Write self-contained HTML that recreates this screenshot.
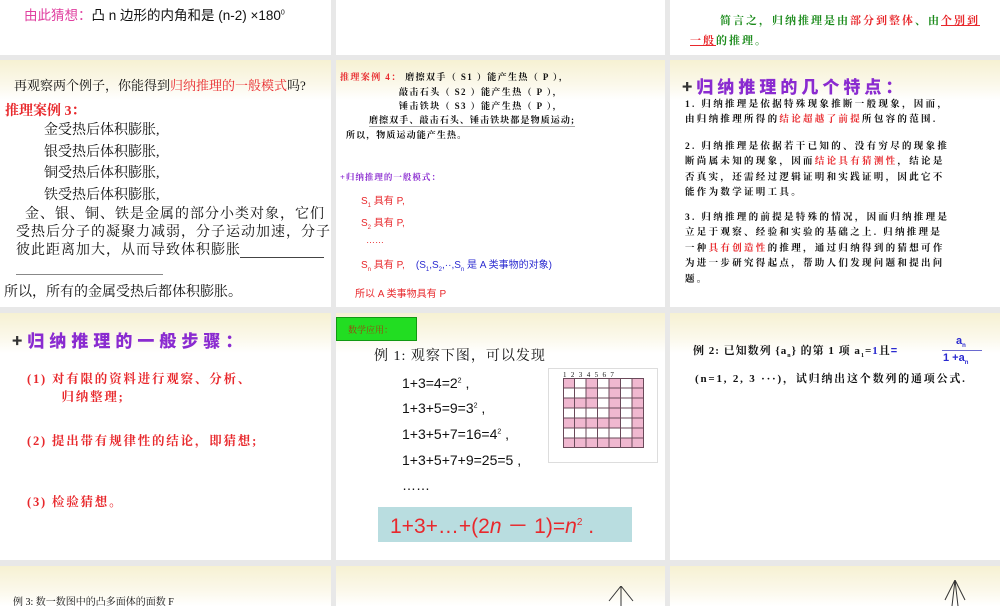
<!DOCTYPE html>
<html><head><meta charset="utf-8"><style>
*{margin:0;padding:0;box-sizing:border-box}
body{width:1000px;height:600px;background:#e8e8e8;position:relative;overflow:hidden;font-family:"Liberation Serif","Noto Serif CJK SC",serif;color:#111}
.s{position:absolute;background:#fff;overflow:hidden}
.band{position:absolute;left:0;right:0;top:0;height:40px;background:linear-gradient(#f6f1d2,#fbf8ea 60%,#fff)}
.t{position:absolute;white-space:nowrap}
.sans{font-family:"Liberation Sans","Noto Sans CJK SC",sans-serif}
.r{color:#e8282c}
.p{color:#8a2bd0}
.b{color:#2a2ad0}
.g{color:#1a8a1a}
.ser{font-family:"Liberation Serif","Noto Serif CJK SC",serif;font-weight:bold}
.ttl{font-family:"Noto Sans CJK SC",sans-serif;font-weight:900}
sup,sub{line-height:0}
</style></head><body>

<!-- row1 -->
<div class="s" style="left:0;top:0;width:331px;height:55px">
<div class="t sans" style="left:24px;top:4px;font-size:13.5px"><span style="color:#e040a0;font-family:'Noto Sans CJK SC'">由此猜想：</span>凸 n 边形的内角和是 (n-2) ×180<sup style="font-size:7px">0</sup></div>
</div>
<div class="s" style="left:336px;top:0;width:329px;height:55px"></div>
<div class="s" style="left:670px;top:0;width:330px;height:55px">
<div class="t ser" style="left:50px;top:12px;font-size:11px;letter-spacing:2px"><span class="g">简言之，归纳推理是由</span><span class="r">部分到整体</span><span class="g">、由</span><span class="r" style="text-decoration:underline">个别到</span></div>
<div class="t ser" style="left:20px;top:32px;font-size:11px;letter-spacing:2px"><span class="r" style="text-decoration:underline">一般</span><span class="g">的推理。</span></div>
</div>

<!-- row2 -->
<div class="s" style="left:0;top:60px;width:331px;height:247px"><div class="band"></div>
<div class="t" style="left:14px;top:15px;font-size:13px">再观察两个例子，你能得到<span class="r">归纳推理的一般模式</span>吗?</div>
<div class="t ser r" style="left:5px;top:40px;font-size:14px">推理案例 3：</div>
<div class="t" style="left:44px;top:60px;font-size:14px;line-height:21.5px">金受热后体积膨胀,<br>银受热后体积膨胀,<br>铜受热后体积膨胀,<br>铁受热后体积膨胀,</div>
<div class="t" style="left:16px;top:146px;font-size:14px;line-height:18px;letter-spacing:1px">&nbsp;&nbsp;金、银、铜、铁是金属的部分小类对象，它们<br>受热后分子的凝聚力减弱，分子运动加速，分子<br>彼此距离加大，从而导致体积膨胀</div>
<div style="position:absolute;left:240px;top:197px;width:84px;border-top:1px solid #444"></div>
<div style="position:absolute;left:16px;top:214px;width:147px;border-top:1px solid #888"></div>
<div class="t" style="left:4px;top:221px;font-size:14px">所以，所有的金属受热后都体积膨胀。</div>
</div>

<div class="s" style="left:336px;top:60px;width:329px;height:247px"><div class="band"></div>
<div class="t ser" style="left:4px;top:10px;font-size:9px;line-height:14.5px;letter-spacing:1.4px"><span class="r">推理案例 4：</span> 磨擦双手（ S1 ）能产生热（ P ），</div>
<div class="t ser" style="left:63px;top:24.5px;font-size:9px;line-height:14.5px;letter-spacing:1.4px">敲击石头（ S2 ）能产生热（ P ），<br>锤击铁块（ S3 ）能产生热（ P ），</div>
<div class="t ser" style="left:33px;top:53px;font-size:9px;letter-spacing:1.1px;border-bottom:1px solid #aaa">磨擦双手、敲击石头、锤击铁块都是物质运动;</div>
<div class="t ser" style="left:10px;top:68px;font-size:9px;letter-spacing:1.1px">所以，物质运动能产生热。</div>
<div class="t ser p" style="left:4px;top:111px;font-size:8.5px;letter-spacing:1px">+归纳推理的一般模式：</div>
<div class="t sans r" style="left:25px;top:132px;font-size:10px">S<sub style="font-size:6px">1</sub> 具有 P,</div>
<div class="t sans r" style="left:25px;top:154px;font-size:10px">S<sub style="font-size:6px">2</sub> 具有 P,</div>
<div class="t sans r" style="left:30px;top:175px;font-size:9px">……</div>
<div class="t sans r" style="left:25px;top:196px;font-size:10px">S<sub style="font-size:6px">n</sub> 具有 P, &nbsp;&nbsp;&nbsp;<span class="b">(S<sub style="font-size:6px">1</sub>,S<sub style="font-size:6px">2</sub>,··,S<sub style="font-size:6px">n</sub> 是 A 类事物的对象)</span></div>
<div class="t sans r" style="left:19px;top:225px;font-size:10px">所以 A 类事物具有 P</div>
</div>

<div class="s" style="left:670px;top:60px;width:330px;height:247px"><div class="band"></div>
<div class="t ttl p" style="left:12px;top:13px;font-size:17px;letter-spacing:4px"><span style="color:#333">+</span>归纳推理的几个特点：</div>
<div class="t ser" style="left:15px;top:38px;font-size:9.5px;line-height:15.4px;letter-spacing:2.3px">1. 归纳推理是依据特殊现象推断一般现象，因而，<br>由归纳推理所得的<span class="r">结论超越了前提</span>所包容的范围.</div>
<div class="t ser" style="left:15px;top:80px;font-size:9.5px;line-height:15.4px;letter-spacing:2.3px">2. 归纳推理是依据若干已知的、没有穷尽的现象推<br>断尚属未知的现象，因而<span class="r">结论具有猜测性</span>，结论是<br>否真实，还需经过逻辑证明和实践证明，因此它不<br>能作为数学证明工具。</div>
<div class="t ser" style="left:15px;top:151px;font-size:9.5px;line-height:15.4px;letter-spacing:2.3px">3. 归纳推理的前提是特殊的情况，因而归纳推理是<br>立足于观察、经验和实验的基础之上. 归纳推理是<br>一种<span class="r">具有创造性</span>的推理，通过归纳得到的猜想可作<br>为进一步研究得起点，帮助人们发现问题和提出问<br>题。</div>
</div>

<!-- row3 -->
<div class="s" style="left:0;top:313px;width:331px;height:247px"><div class="band"></div>
<div class="t ttl p" style="left:12px;top:14px;font-size:17px;letter-spacing:5px"><span style="color:#333">+</span>归纳推理的一般步骤：</div>
<div class="t ser r" style="left:27px;top:57px;font-size:12.5px;line-height:18px;letter-spacing:1.8px">(1) 对有限的资料进行观察、分析、<br>&nbsp;&nbsp;&nbsp;&nbsp;&nbsp;&nbsp;&nbsp;归纳整理;</div>
<div class="t ser r" style="left:27px;top:118px;font-size:12.5px;letter-spacing:1.8px">(2) 提出带有规律性的结论，即猜想;</div>
<div class="t ser r" style="left:27px;top:179px;font-size:12.5px;letter-spacing:1.8px">(3) 检验猜想。</div>
</div>

<div class="s" style="left:336px;top:313px;width:329px;height:247px"><div class="band"></div>
<div style="position:absolute;left:0;top:4px;width:81px;height:24px;background:#22dd22;border:1px solid #119911"></div>
<div class="t" style="left:12px;top:10px;font-size:9px;color:#a04010">数学应用：</div>
<div class="t" style="left:38px;top:32px;font-size:14px;letter-spacing:1px">例 1: 观察下图，可以发现</div>
<div class="t sans" style="left:66px;top:62px;font-size:14px">1+3=4=2<sup style="font-size:7px">2</sup> ,</div>
<div class="t sans" style="left:66px;top:87px;font-size:14px">1+3+5=9=3<sup style="font-size:7px">2</sup> ,</div>
<div class="t sans" style="left:66px;top:113px;font-size:14px">1+3+5+7=16=4<sup style="font-size:7px">2</sup> ,</div>
<div class="t sans" style="left:66px;top:139px;font-size:14px">1+3+5+7+9=25=5 ,</div>
<div class="t sans" style="left:66px;top:164px;font-size:14px">……</div>
<div style="position:absolute;left:42px;top:194px;width:254px;height:35px;background:#b9dde0"></div>
<div class="t sans r" style="left:54px;top:197px;font-size:21px">1+3+…+(2<i>n</i> － 1)=<i>n</i><sup style="font-size:10px">2</sup> .</div>
<div style="position:absolute;left:212px;top:55px;width:110px;height:95px;border:1px solid #ddd"></div>
<div class="t" style="left:227px;top:58px;font-size:7px;letter-spacing:4.4px">1234567</div>
<svg style="position:absolute;left:227px;top:65px" width="81" height="70" viewBox="0 0 81 70">
<g fill="#f0b8d0">
<rect x="0" y="0" width="11.5" height="10"/><rect x="23" y="0" width="11.5" height="30"/><rect x="0" y="20" width="34.5" height="10"/>
<rect x="46" y="0" width="11.5" height="50"/><rect x="0" y="40" width="57.5" height="10"/>
<rect x="69" y="0" width="12" height="70"/><rect x="0" y="60" width="81" height="10"/>
</g>
<g stroke="#6a4a5a" stroke-width="1" fill="none">
<rect x="0.5" y="0.5" width="80" height="69"/>
<path d="M11.5 0V70M23 0V70M34.5 0V70M46 0V70M57.5 0V70M69 0V70M0 10H81M0 20H81M0 30H81M0 40H81M0 50H81M0 60H81"/>
</g></svg>
</div>

<div class="s" style="left:670px;top:313px;width:330px;height:247px"><div class="band"></div>
<div class="t ser" style="left:23px;top:29px;font-size:11px;letter-spacing:1px">例 2: 已知数列 {a<sub style="font-size:6px">n</sub>} 的第 1 项 a<sub style="font-size:6px">1</sub>=<span class="b">1</span>且<span class="b sans" style="font-weight:bold">=</span></div>
<div class="t sans b" style="left:286px;top:22px;font-size:11px;font-weight:bold">a<sub style="font-size:6px">n</sub></div>
<div style="position:absolute;left:272px;top:37px;width:40px;border-top:1px solid #6a6ad0"></div>
<div class="t sans b" style="left:273px;top:39px;font-size:11px;font-weight:bold">1 +a<sub style="font-size:6px">n</sub></div>
<div class="t ser" style="left:25px;top:57px;font-size:11px;letter-spacing:1.8px">(n=1, 2, 3 ···)，试归纳出这个数列的通项公式.</div>
</div>

<!-- row4 -->
<div class="s" style="left:0;top:566px;width:331px;height:40px"><div class="band"></div>
<div class="t" style="left:13px;top:27px;font-size:10px">例 3: 数一数图中的凸多面体的面数 F</div></div>
<div class="s" style="left:336px;top:566px;width:329px;height:40px"><div class="band"></div>
<svg style="position:absolute;left:270px;top:20px" width="30" height="20"><path d="M15 0L3 15M15 0L27 15M15 0V20" stroke="#333" fill="none"/></svg></div>
<div class="s" style="left:670px;top:566px;width:330px;height:40px"><div class="band"></div>
<svg style="position:absolute;left:270px;top:14px" width="30" height="26"><path d="M15 0L5 20M15 0L25 20M15 0L12 26M15 0L18 26" stroke="#333" fill="none"/></svg></div>

</body></html>
